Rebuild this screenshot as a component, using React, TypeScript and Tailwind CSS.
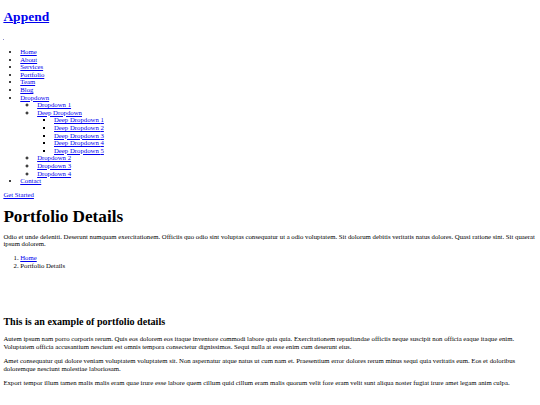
import React from "react";

const A = ({ children }: { children: React.ReactNode }) => (
  <a href="#" className="text-[#0000ee] underline">
    {children}
  </a>
);

export default function App() {
  const top = ["Home", "About", "Services", "Portfolio", "Team", "Blog"];
  return (
    <div className="flow-root min-h-[405px] bg-white px-[3.375px] pb-[4px] font-[family-name:Liberation_Serif,Times_New_Roman,serif] text-[6.75px] leading-[7.59px] text-black">
      <header>
        <h1 className="mt-[9.05px] text-[13.5px] font-bold leading-[15.6px]">
          <A>Append</A>
        </h1>
        <div className="mt-[9.05px] h-[7.59px]">
          <span className="inline-block h-[1px] w-[1px] translate-y-[5px] bg-[#8c8cc8] align-top" />
        </div>
        <nav>
          <ul className="mt-[6.75px] list-disc pl-[16.875px]">
            {top.map((t) => (
              <li key={t}>
                <A>{t}</A>
              </li>
            ))}
            <li>
              <A>Dropdown</A>
              <ul className="list-[circle] pl-[16.875px]">
                <li>
                  <A>Dropdown 1</A>
                </li>
                <li>
                  <A>Deep Dropdown</A>
                  <ul className="list-[square] pl-[16.875px]">
                    {[1, 2, 3, 4, 5].map((n) => (
                      <li key={n}>
                        <A>Deep Dropdown {n}</A>
                      </li>
                    ))}
                  </ul>
                </li>
                <li>
                  <A>Dropdown 2</A>
                </li>
                <li>
                  <A>Dropdown 3</A>
                </li>
                <li>
                  <A>Dropdown 4</A>
                </li>
              </ul>
            </li>
            <li>
              <A>Contact</A>
            </li>
          </ul>
        </nav>
        <div className="mt-[6.75px]">
          <A>Get Started</A>
        </div>
      </header>
      <main>
        <section>
          <h2 className="mt-[7.8px] text-[17.2px] font-bold leading-[19.8px]">Portfolio Details</h2>
          <p className="mt-[6.2px]">
            Odio et unde deleniti. Deserunt numquam exercitationem. Officiis quo odio sint voluptas consequatur ut a odio
            voluptatem. Sit dolorum debitis veritatis natus dolores. Quasi ratione sint. Sit quaerat ipsum dolorem.
          </p>
          <nav>
            <ol className="mt-[6.2px] list-decimal pl-[16.875px]">
              <li>
                <A>Home</A>
              </li>
              <li>Portfolio Details</li>
            </ol>
          </nav>
        </section>
        <section>
          <h2 className="mt-[46.7px] text-[10.125px] font-bold leading-[11.4px]">
            This is an example of portfolio details
          </h2>
          <p className="mt-[8px]">
            Autem ipsum nam porro corporis rerum. Quis eos dolorem eos itaque inventore commodi labore quia quia.
            Exercitationem repudiandae officiis neque suscipit non officia eaque itaque enim. Voluptatem officia
            accusantium nesciunt est omnis tempora consectetur dignissimos. Sequi nulla at esse enim cum deserunt eius.
          </p>
          <p className="mt-[6.75px]">
            Amet consequatur qui dolore veniam voluptatem voluptatem sit. Non aspernatur atque natus ut cum nam et.
            Praesentium error dolores rerum minus sequi quia veritatis eum. Eos et doloribus doloremque nesciunt molestiae
            laboriosam.
          </p>
          <p className="mt-[6.75px]">
            Export tempor illum tamen malis malis eram quae irure esse labore quem cillum quid cillum eram malis quorum
            velit fore eram velit sunt aliqua noster fugiat irure amet legam anim culpa.
          </p>
        </section>
      </main>
    </div>
  );
}
